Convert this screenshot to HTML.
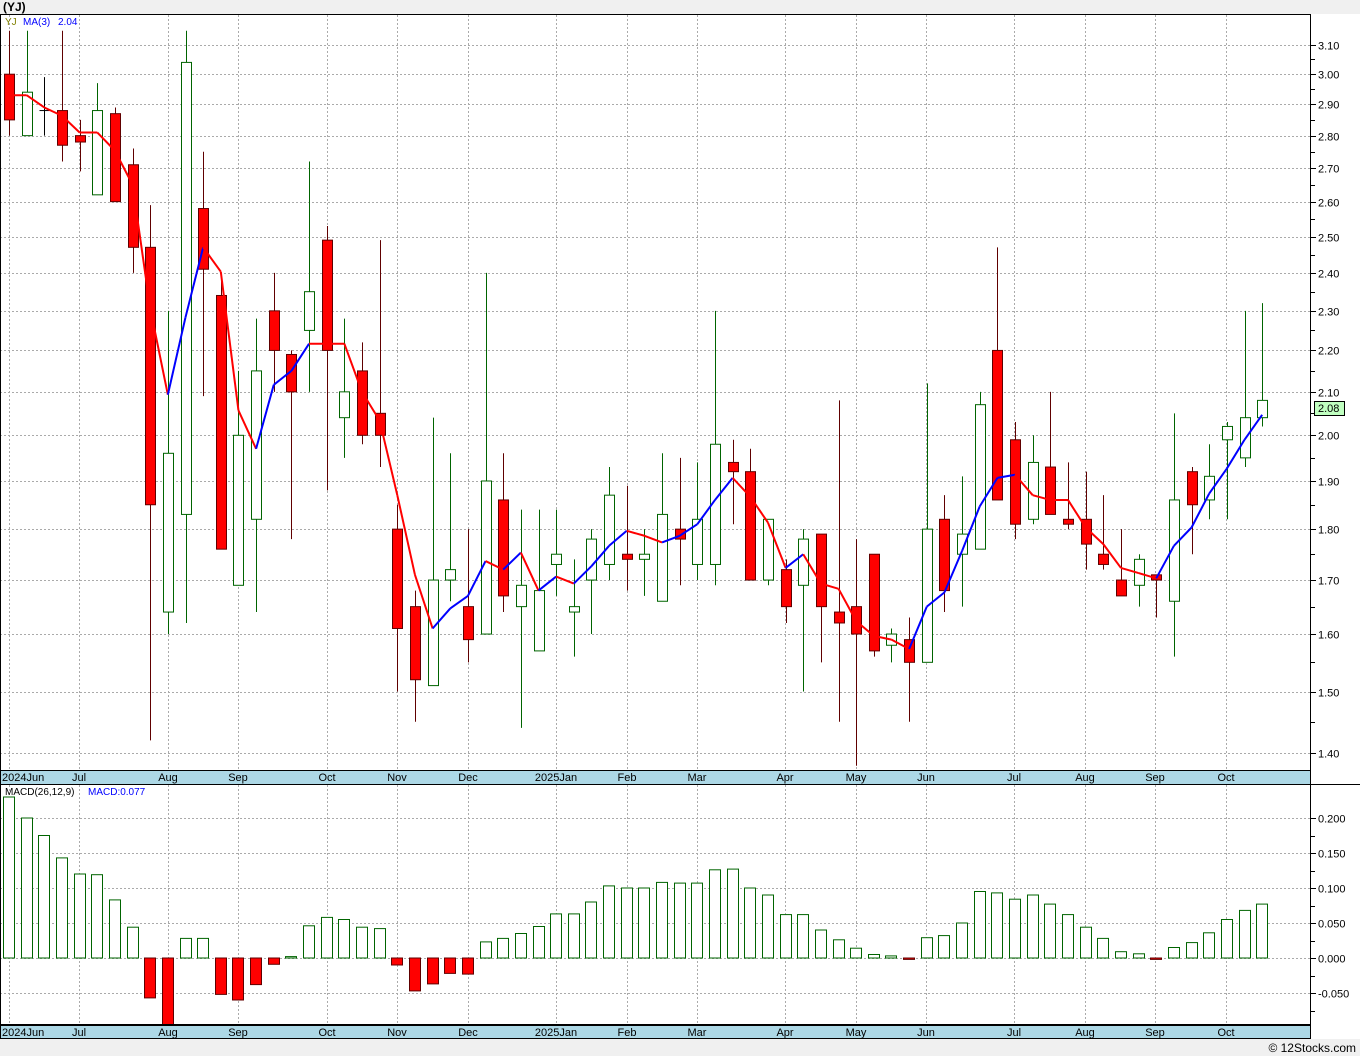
<!DOCTYPE html>
<html><head><meta charset="utf-8"><style>
html,body{margin:0;padding:0;background:#fff;}
svg{display:block;font-family:"Liberation Sans",sans-serif;}
</style></head><body>
<svg id="c" width="1360" height="1056" xmlns="http://www.w3.org/2000/svg"></svg>
<script>
var C=[
[3.00,2.85,3.15,2.80],[2.80,2.94,3.15,2.80],[2.88,2.88,2.99,2.80],[2.88,2.77,3.15,2.72],[2.80,2.78,2.85,2.69],
[2.62,2.88,2.97,2.62],[2.87,2.60,2.89,2.60],[2.71,2.47,2.76,2.40],[2.47,1.85,2.59,1.42],[1.64,1.96,2.30,1.60],
[1.83,3.04,3.15,1.62],[2.58,2.41,2.75,2.09],[2.34,1.76,2.40,1.76],[1.69,2.00,2.15,1.69],[1.82,2.15,2.28,1.64],
[2.30,2.20,2.40,2.10],[2.19,2.10,2.20,1.78],[2.25,2.35,2.72,2.10],[2.49,2.20,2.53,1.88],[2.04,2.10,2.28,1.95],
[2.15,2.00,2.22,1.98],[2.05,2.00,2.49,1.93],[1.80,1.61,1.85,1.50],[1.65,1.52,1.68,1.45],[1.51,1.70,2.04,1.51],
[1.70,1.72,1.96,1.66],[1.65,1.59,1.80,1.55],[1.60,1.90,2.40,1.60],[1.86,1.67,1.96,1.64],[1.65,1.69,1.84,1.44],
[1.57,1.68,1.84,1.57],[1.73,1.75,1.84,1.67],[1.64,1.65,1.74,1.56],[1.70,1.78,1.80,1.60],[1.73,1.87,1.93,1.70],
[1.75,1.74,1.89,1.68],[1.74,1.75,1.80,1.67],[1.66,1.83,1.96,1.66],[1.80,1.78,1.95,1.69],[1.73,1.82,1.94,1.70],
[1.73,1.98,2.30,1.69],[1.94,1.92,1.99,1.81],[1.92,1.70,1.97,1.70],[1.70,1.82,1.82,1.69],[1.72,1.65,1.74,1.62],
[1.69,1.78,1.80,1.50],[1.79,1.65,1.79,1.55],[1.64,1.62,2.08,1.45],[1.65,1.60,1.78,1.38],[1.75,1.57,1.75,1.56],
[1.58,1.60,1.61,1.55],[1.59,1.55,1.63,1.45],[1.55,1.80,2.12,1.55],[1.82,1.68,1.87,1.64],[1.75,1.79,1.91,1.65],
[1.76,2.07,2.10,1.76],[2.20,1.86,2.47,1.86],[1.99,1.81,2.03,1.78],[1.82,1.94,2.00,1.81],[1.93,1.83,2.10,1.83],
[1.82,1.81,1.94,1.80],[1.82,1.77,1.92,1.72],[1.75,1.73,1.87,1.72],[1.70,1.67,1.80,1.67],[1.69,1.74,1.75,1.65],
[1.71,1.70,1.71,1.63],[1.66,1.86,2.05,1.56],[1.92,1.85,1.93,1.75],[1.86,1.91,1.98,1.82],[1.99,2.02,2.03,1.82],
[1.95,2.04,2.30,1.93],[2.04,2.08,2.32,2.02]];
var M=[0.23,0.20,0.175,0.143,0.12,0.119,0.083,0.044,-0.057,-0.097,0.028,0.028,-0.052,-0.06,-0.038,-0.009,0.002,0.046,0.058,0.055,0.044,0.042,-0.01,-0.047,-0.037,-0.022,-0.023,0.023,0.028,0.035,0.045,0.063,0.063,0.08,0.103,0.1,0.1,0.108,0.107,0.107,0.126,0.127,0.1,0.09,0.062,0.062,0.04,0.026,0.014,0.005,0.003,-0.002,0.029,0.032,0.05,0.095,0.093,0.084,0.09,0.077,0.062,0.044,0.028,0.009,0.006,-0.002,0.015,0.022,0.036,0.055,0.068,0.077];
function X(i){return 9+i*17.65;}
function Y(p){return 45+890.6*Math.log(3.1/p);}
function MY(v){return 958-700*v;}
var s='';
s+='<rect x="0" y="0" width="1360" height="14" fill="#f0f0f0"/>';
s+='<text x="3" y="11" font-size="12" font-weight="bold" fill="#000">(YJ)</text>';
s+='<rect x="0" y="1039" width="1360" height="17" fill="#f0f0f0"/>';
s+='<text x="1356" y="1052" font-size="12" text-anchor="end" fill="#000">© 12Stocks.com</text>';
var vl=[9,79,168,238,327,397,468,556,627,697,785,856,926,1014,1085,1155,1226];
var ml=['2024Jun','Jul','Aug','Sep','Oct','Nov','Dec','2025Jan','Feb','Mar','Apr','May','Jun','Jul','Aug','Sep','Oct'];
for(var k=0;k<vl.length;k++){
 s+='<line x1="'+vl[k]+'.5" y1="15" x2="'+vl[k]+'.5" y2="770" stroke="#aaa" stroke-dasharray="2,2"/>';
 s+='<line x1="'+vl[k]+'.5" y1="785" x2="'+vl[k]+'.5" y2="1025" stroke="#aaa" stroke-dasharray="2,2"/>';
}
for(var p=14;p<=31;p++){var y=Math.round(Y(p/10))+0.5;
 s+='<line x1="0" y1="'+y+'" x2="1311" y2="'+y+'" stroke="#aaa" stroke-dasharray="2,2"/>';
 s+='<line x1="1311" y1="'+y+'" x2="1316" y2="'+y+'" stroke="#000"/>';
 s+='<text x="1318" y="'+(y+4)+'" font-size="11" fill="#000">'+(p/10).toFixed(2)+'</text>';
 var y2=Math.round(Y(p/10+0.05))+0.5; if(p<31) s+='<line x1="1311" y1="'+y2+'" x2="1315" y2="'+y2+'" stroke="#000"/>';
}
var mv=[0.2,0.15,0.1,0.05,0,-0.05];
for(var k=0;k<mv.length;k++){var y=Math.round(MY(mv[k]))+0.5;
 s+='<line x1="0" y1="'+y+'" x2="1311" y2="'+y+'" stroke="#aaa" stroke-dasharray="2,2"/>';
 s+='<line x1="1311" y1="'+y+'" x2="1316" y2="'+y+'" stroke="#000"/>';
 s+='<text x="1318" y="'+(y+4)+'" font-size="11" fill="#000">'+(mv[k]<0?'-':'')+Math.abs(mv[k]).toFixed(3)+'</text>';
 var y2=Math.round(MY(mv[k]-0.025))+0.5; if(y2<1025) s+='<line x1="1311" y1="'+y2+'" x2="1315" y2="'+y2+'" stroke="#000"/>';
}
for(var i=0;i<C.length;i++){var c=C[i],x=Math.round(X(i))+0.5;
 var up=c[1]>c[0],dj=c[1]==c[0];var col=dj?'#000':(up?'#006400':'#600000');
 s+='<line x1="'+x+'" y1="'+Y(c[2])+'" x2="'+x+'" y2="'+Y(c[3])+'" stroke="'+col+'"/>';
 var t=Y(Math.max(c[0],c[1])),b=Y(Math.min(c[0],c[1]));
 if(dj){s+='<line x1="'+(x-5)+'" y1="'+t+'" x2="'+(x+5)+'" y2="'+t+'" stroke="#000"/>';}
 else s+='<rect x="'+(x-5)+'" y="'+t+'" width="10" height="'+Math.max(b-t,2)+'" fill="'+(up?'#fff':'#ff0000')+'" stroke="'+col+'"/>';
}
var ma=[];for(var i=0;i<C.length;i++){if(i<2){ma.push(null);continue;}ma.push((C[i][1]+C[i-1][1]+C[i-2][1])/3);}
ma[0]=2.93;ma[1]=2.93;
for(var i=1;i<C.length;i++){var col=ma[i]>ma[i-1]?'#0000ff':'#ff0000';
 s+='<line x1="'+X(i-1)+'" y1="'+Y(ma[i-1])+'" x2="'+X(i)+'" y2="'+Y(ma[i])+'" stroke="'+col+'" stroke-width="2"/>';}
for(var i=0;i<M.length;i++){var x=Math.round(X(i))-5.5,v=M[i];
 var t=Math.max(MY(Math.max(v,0)),785),b=Math.min(MY(Math.min(v,0)),1025);
 if(v>=0) s+='<rect x="'+x+'" y="'+t+'" width="11" height="'+(b-t)+'" fill="#fff" stroke="#006400"/>';
 else s+='<rect x="'+x+'" y="'+t+'" width="11" height="'+Math.max(b-t,1)+'" fill="#ff0000" stroke="#600000"/>';}
s+='<rect x="0.5" y="14.5" width="1310" height="1010" fill="none" stroke="#000"/>';
s+='<rect x="0.5" y="770.5" width="1310" height="14" fill="#add8e6" stroke="#000"/>';
s+='<rect x="0.5" y="1025.5" width="1310" height="13" fill="#add8e6" stroke="#000"/>';
s+='<line x1="1311" y1="784.5" x2="1360" y2="784.5" stroke="#000"/>';
for(var k=0;k<vl.length;k++){
 var anc=k==0?'start':'middle',xx=k==0?2:vl[k];
 s+='<text x="'+xx+'" y="781" font-size="11" text-anchor="'+anc+'" fill="#000">'+ml[k]+'</text>';
 s+='<text x="'+xx+'" y="1036" font-size="11" text-anchor="'+anc+'" fill="#000">'+ml[k]+'</text>';
}
s+='<text x="5" y="25" font-size="10" fill="#808000">YJ</text><text x="23" y="25" font-size="10" fill="#0000ff">MA(3)</text><text x="58" y="25" font-size="10" fill="#0000ff">2.04</text>';
s+='<text x="5" y="795" font-size="10" fill="#000">MACD(26,12,9)</text><text x="88" y="795" font-size="10" fill="#0000ff">MACD:0.077</text>';
var yl=408;
s+='<rect x="1314.5" y="'+(yl-7)+'.5" width="30" height="14" fill="#c0ffc0" stroke="#000"/>';
s+='<text x="1318" y="'+(yl+4)+'" font-size="11" fill="#000">2.08</text>';
document.getElementById('c').innerHTML=s;
</script>
</body></html>
